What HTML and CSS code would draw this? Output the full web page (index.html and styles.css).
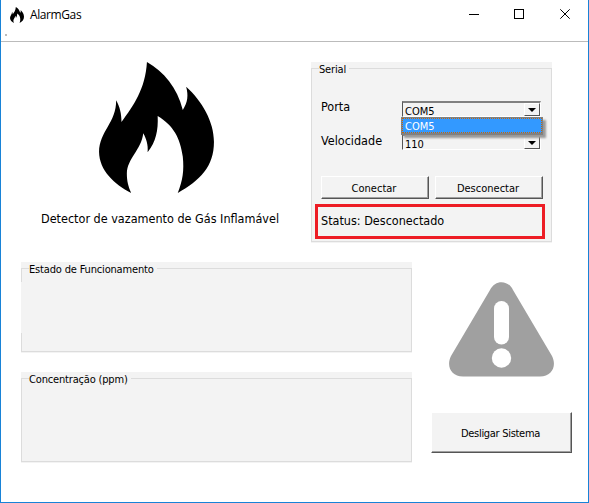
FILE: index.html
```html
<!DOCTYPE html>
<html lang="pt-BR">
<head>
<meta charset="utf-8">
<title>AlarmGas</title>
<link rel="stylesheet" href="styles.css">
</head>
<body>
<svg class="defs" width="0" height="0">
  <symbol id="flame" viewBox="58 37 343 391">
    <path d="M201 37C252 66 291 113 308 180C323 157 325 137 318 111C365 153 401 215 401 275C401 350 359 390 293 428C308 390 312 361 308 320C300 262 280 227 233 198C235 240 228 275 203 306C205 285 199 266 190 250C184 300 142 325 141 370C141 393 145 408 154 428C103 401 59 362 58 305C59 244 110 217 109 151C120 171 125 190 125 216C161 167 196 118 201 37Z"/>
  </symbol>
</svg>
<div class="window">
  <header class="titlebar">
    <div class="caption">
      <svg class="app-icon"><use href="#flame"/></svg>
      <span class="app-name">AlarmGas</span>
      <svg class="controls" width="100" height="13" viewBox="0 0 100 13" fill="none" stroke="#000">
        <path d="M0 6.500H10M45.500 1.500h9v9h-9z" shape-rendering="crispEdges"/>
        <path d="M91.300 1.300l9.400 9.400M100.700 1.300l-9.400 9.400"/>
      </svg>
    </div>
    <div class="menu-dot"></div>
  </header>
  <main class="content">
    <div class="top">
      <section class="brand">
        <svg class="logo"><use href="#flame"/></svg>
        <p class="label tagline">Detector de vazamento de Gás Inflamável</p>
      </section>
      <section class="group serial">
        <h2 class="legend"><span>Serial</span></h2>
        <div class="fields">
          <span class="label">Porta</span>
          <div class="combo port"><span>COM5</span><i class="arrow"></i>
            <div class="options"><span>COM5</span></div>
          </div>
          <span class="label">Velocidade</span>
          <div class="combo"><span>110</span><i class="arrow"></i></div>
        </div>
        <div class="actions">
          <button class="button">Conectar</button>
          <button class="button">Desconectar</button>
        </div>
        <p class="status label"><span>Status: Desconectado</span></p>
      </section>
    </div>
    <div class="bottom">
      <div class="readings">
        <section class="group reading state"><h2 class="legend"><span>Estado de Funcionamento</span></h2></section>
        <section class="group reading"><h2 class="legend"><span>Concentração (ppm)</span></h2></section>
      </div>
      <div class="side">
        <svg class="warning" viewBox="0 0 105 95">
          <path fill="#a0a0a0" d="M41 8C46-2.500 59-2.500 64 8L103 74C108 84 103 94 91 94.500H14C2 94-3 84 2 74Z"/>
          <rect x="45" y="19" width="15" height="43.500" rx="7.500" fill="#fff"/>
          <circle cx="52.500" cy="76" r="9.700" fill="#fff"/>
        </svg>
        <button class="button shutdown">Desligar Sistema</button>
      </div>
    </div>
  </main>
</div>
</body>
</html>
```
FILE: styles.css
```css
* { box-sizing: border-box; }
body { margin: 0; font: 11px/14px "DejaVu Sans Condensed", "DejaVu Sans", sans-serif; font-stretch: condensed; color: #000; }
h2, p { margin: 0; font-weight: normal; font-size: inherit; }
.defs { position: absolute; }
.window { width: 589px; height: 503px; background: #fff; border: solid #1883d7; border-width: 0 1px 1px; }
.titlebar { height: 42px; border-bottom: 1px solid #bbb; }
.caption { display: flex; align-items: center; height: 29px; padding: 0 19px 0 9px; }
.app-icon { width: 14px; height: 16px; }
.app-name { margin-left: 6px; font: 12px/16px "Open Sans", sans-serif; letter-spacing: -.4px; }
.controls { margin-left: auto; overflow: visible; }
.menu-dot { width: 2px; height: 2px; margin: 5px 0 0 4px; background: #bbb; }
.content { padding: 20px 0 0 20px; }
.top { display: flex; height: 200px; }
.brand { width: 290px; }
.logo { display: block; width: 115px; height: 131px; margin-left: 78px; }
.label { font-size: 12.500px; line-height: 16px; white-space: nowrap; }
.tagline { margin: 18px 0 0 20px; }
.group { position: relative; background: #f3f3f3; }
.group::before { content: ""; position: absolute; inset: 6px 0 1px; border: 1px solid #dcdcdc; }
.state::after { content: ""; position: absolute; left: 0; top: 20px; width: 1px; height: 51px; background: #f3f3f3; }
.legend { position: relative; height: 15px; padding: 1px 0 0 8px; white-space: nowrap; letter-spacing: -.17px; }
.legend span { display: inline-block; padding-right: 3px; background: #f3f3f3; }
.serial { width: 241px; height: 181px; }
.fields { display: grid; grid-template-columns: 81px 139px; row-gap: 17px; margin: 24px 0 0 10px; }
.fields .label { height: 16px; margin-top: -2px; }
.fields .label:nth-of-type(2) { margin-top: -1px; }
.combo { position: relative; display: flex; justify-content: space-between; height: 16px; padding-left: 2px; border: 1px solid #fff; border-top: 2px solid #808080; border-left-color: #555; line-height: 17px; }
.arrow { width: 16px; height: 13px; border: 1px solid #fff; border-right-color: #555; border-bottom-color: #555; display: grid; place-items: center; }
.arrow::after { content: ""; border: 4px solid transparent; border-top-color: #000; border-bottom: 0; }
.options { position: absolute; z-index: 1; left: -2px; top: 14px; width: 142px; height: 18px; background: #3399ff; border: solid #808080; border-width: 1px 1px 2px; color: #fff; line-height: 15px; box-shadow: 3px 3px 2px #999; }
.options span { display: block; height: 15px; padding-left: 2px; border: 1px dotted #cc6600; }
.actions { position: relative; display: flex; gap: 6px; margin: 26px 0 0 10px; }
.button { width: 108px; height: 23px; padding: 2px 2px 0 0; font: inherit; color: #000; background: #f3f3f3; border: 1px solid #fff; border-right-color: #555; border-bottom-color: #555; box-shadow: inset -1px -1px #a0a0a0; }
.status { position: relative; width: 230px; height: 35px; margin: 5px 0 0 4px; padding: 6px 3px; border: 3px solid #ed1c24; }
.bottom { display: flex; }
.readings { display: grid; gap: 19px; }
.reading { width: 391px; height: 91px; }
.side { padding: 20px 0 0 19px; }
.warning { display: block; width: 105px; height: 95px; margin-left: 18px; }
.shutdown { display: block; width: 141px; height: 41px; padding-top: 3px; margin-top: 35px; letter-spacing: -.3px; }
```
